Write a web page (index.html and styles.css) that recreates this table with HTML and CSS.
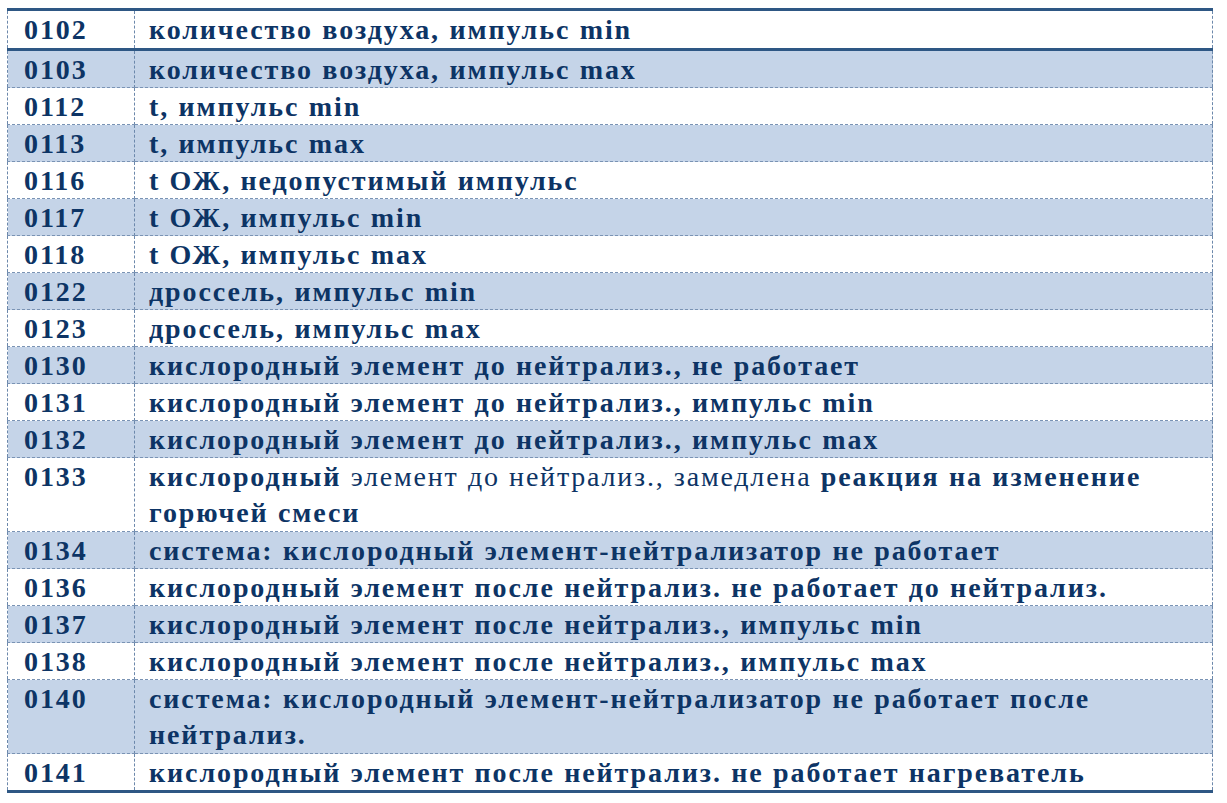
FILE: index.html
```html
<!DOCTYPE html>
<html lang="ru">
<head>
<meta charset="utf-8">
<title>Коды ошибок</title>
<link rel="stylesheet" href="styles.css">
</head>
<body>
<table class="codes">
  <tbody>
    <tr class="first"><td class="code">0102</td><td class="desc">количество воздуха, импульс min</td></tr>
    <tr class="alt"><td class="code">0103</td><td class="desc">количество воздуха, импульс max</td></tr>
    <tr><td class="code">0112</td><td class="desc">t, импульс min</td></tr>
    <tr class="alt"><td class="code">0113</td><td class="desc">t, импульс max</td></tr>
    <tr><td class="code">0116</td><td class="desc">t ОЖ, недопустимый импульс</td></tr>
    <tr class="alt"><td class="code">0117</td><td class="desc">t ОЖ, импульс min</td></tr>
    <tr><td class="code">0118</td><td class="desc">t ОЖ, импульс max</td></tr>
    <tr class="alt"><td class="code">0122</td><td class="desc">дроссель, импульс min</td></tr>
    <tr><td class="code">0123</td><td class="desc">дроссель, импульс max</td></tr>
    <tr class="alt"><td class="code">0130</td><td class="desc">кислородный элемент до нейтрализ., не работает</td></tr>
    <tr><td class="code">0131</td><td class="desc">кислородный элемент до нейтрализ., импульс min</td></tr>
    <tr class="alt"><td class="code">0132</td><td class="desc">кислородный элемент до нейтрализ., импульс max</td></tr>
    <tr class="tall"><td class="code">0133</td><td class="desc"><span class="line">кислородный <span class="light">элемент до нейтрализ., замедлена</span> реакция на изменение</span> <span class="line">горючей смеси</span></td></tr>
    <tr class="alt"><td class="code">0134</td><td class="desc">система: кислородный элемент-нейтрализатор не работает</td></tr>
    <tr><td class="code">0136</td><td class="desc">кислородный элемент после нейтрализ. не работает до нейтрализ.</td></tr>
    <tr class="alt"><td class="code">0137</td><td class="desc">кислородный элемент после нейтрализ., импульс min</td></tr>
    <tr><td class="code">0138</td><td class="desc">кислородный элемент после нейтрализ., импульс max</td></tr>
    <tr class="alt tall"><td class="code">0140</td><td class="desc"><span class="line">система: кислородный элемент-нейтрализатор не работает после</span> <span class="line">нейтрализ.</span></td></tr>
    <tr class="last"><td class="code">0141</td><td class="desc">кислородный элемент после нейтрализ. не работает нагреватель</td></tr>
  </tbody>
</table>
</body>
</html>
```
FILE: styles.css
```css
html, body {
  margin: 0;
  padding: 0;
  background: #ffffff;
}

body {
  padding: 8px 0 0 7px;
}

.codes {
  width: 1206px;
  border-collapse: collapse;
  table-layout: fixed;
  font-family: "Liberation Serif", "Times New Roman", serif;
  font-weight: bold;
  font-size: 28px;
  letter-spacing: 1.9px;
  word-spacing: 0.5px;
  color: #0d3465;
  border-top: 3px solid #2e5784;
  border-bottom: 3px solid #2e5784;
  border-left: 1px dashed #6c88ab;
  border-right: 1px dashed #6c88ab;
}

.codes td {
  border-top: 1px dashed #7a93b4;
  border-bottom: 1px dashed #7a93b4;
  vertical-align: top;
  line-height: 35px;
  padding: 1px 0 0 0;
}

.codes td.code {
  width: 110px;
  padding-left: 16px;
  border-right: 1px dashed #6c88ab;
}

.codes td.desc {
  padding-left: 14px;
  padding-right: 4px;
}

.codes tr.first td {
  line-height: 36px;
  border-bottom: 3px solid #2e5784;
}

.codes tr.tall td {
  line-height: 36px;
}

.codes tr.alt td {
  background: #c5d4e8;
}

.line {
  display: block;
}

.light {
  font-weight: normal;
  letter-spacing: 1.8px;
}
```
